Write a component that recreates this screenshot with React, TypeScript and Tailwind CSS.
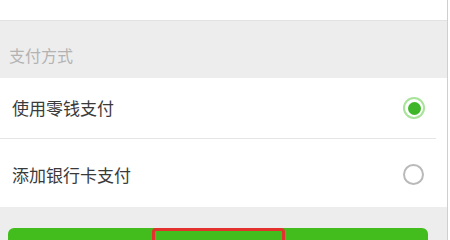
import React, { useState } from 'react';

const font = { fontFamily: '"Noto Sans CJK SC", "Noto Sans", sans-serif' };

function Radio({ checked }: { checked: boolean }) {
  return checked ? (
    <div className="h-[22px] w-[22px] rounded-full bg-[#a8e39a] flex items-center justify-center">
      <div className="h-[18px] w-[18px] rounded-full bg-white flex items-center justify-center">
        <div className="h-[13px] w-[13px] rounded-full bg-[#3fb62a]" />
      </div>
    </div>
  ) : (
    <div className="h-[21px] w-[21px] rounded-full border-2 border-[#b9b9b9] bg-white" />
  );
}

export default function App() {
  const [method, setMethod] = useState('balance');

  const options = [
    { id: 'balance', label: '使用零钱支付' },
    { id: 'card', label: '添加银行卡支付' },
  ];

  return (
    <div className="w-[450px] h-[240px] overflow-hidden bg-white" style={font}>
      <div className="w-[448px] h-full bg-[#ededed] border-r border-[#cfcfcf]">
        {/* previous row, scrolled mostly out of view */}
        <div className="h-[21px] bg-white border-b border-[#e2e2e2] overflow-hidden flex justify-between px-3">
          <span className="text-[17px] leading-none -mt-[18px] text-[#f2f2f2]">收款方式</span>
          <span className="text-[17px] leading-none -mt-[18px] text-[#f4f4f4] mr-4">
            请确认收款方信息和付款金额
          </span>
        </div>

        <div className="h-[57px] flex items-center pl-[9px] pt-[11px] text-[16px] text-[#b3b3b3]">
          支付方式
        </div>

        <div className="bg-white">
          {options.map((o, i) => (
            <div
              key={o.id}
              onClick={() => setMethod(o.id)}
              className={`flex items-center justify-between pl-3 ${
                i === 0
                  ? 'h-[61px] border-b border-[#e5e5e5] mr-[11px] pr-[11px]'
                  : 'h-[68px] pr-[23px] pt-[3px]'
              }`}
            >
              <span className="text-[17px] text-[#3a3a3a]">{o.label}</span>
              <Radio checked={method === o.id} />
            </div>
          ))}
        </div>

        <div className="pl-2 pr-[19px] pt-[21px]">
          <div className="relative h-[40px] rounded-[6px] bg-[#43bd1d]">
            <div className="absolute left-[144px] top-0 w-[133px] h-[40px] border-[3px] border-[#e3312d] rounded-[4px]" />
          </div>
        </div>
      </div>
    </div>
  );
}
